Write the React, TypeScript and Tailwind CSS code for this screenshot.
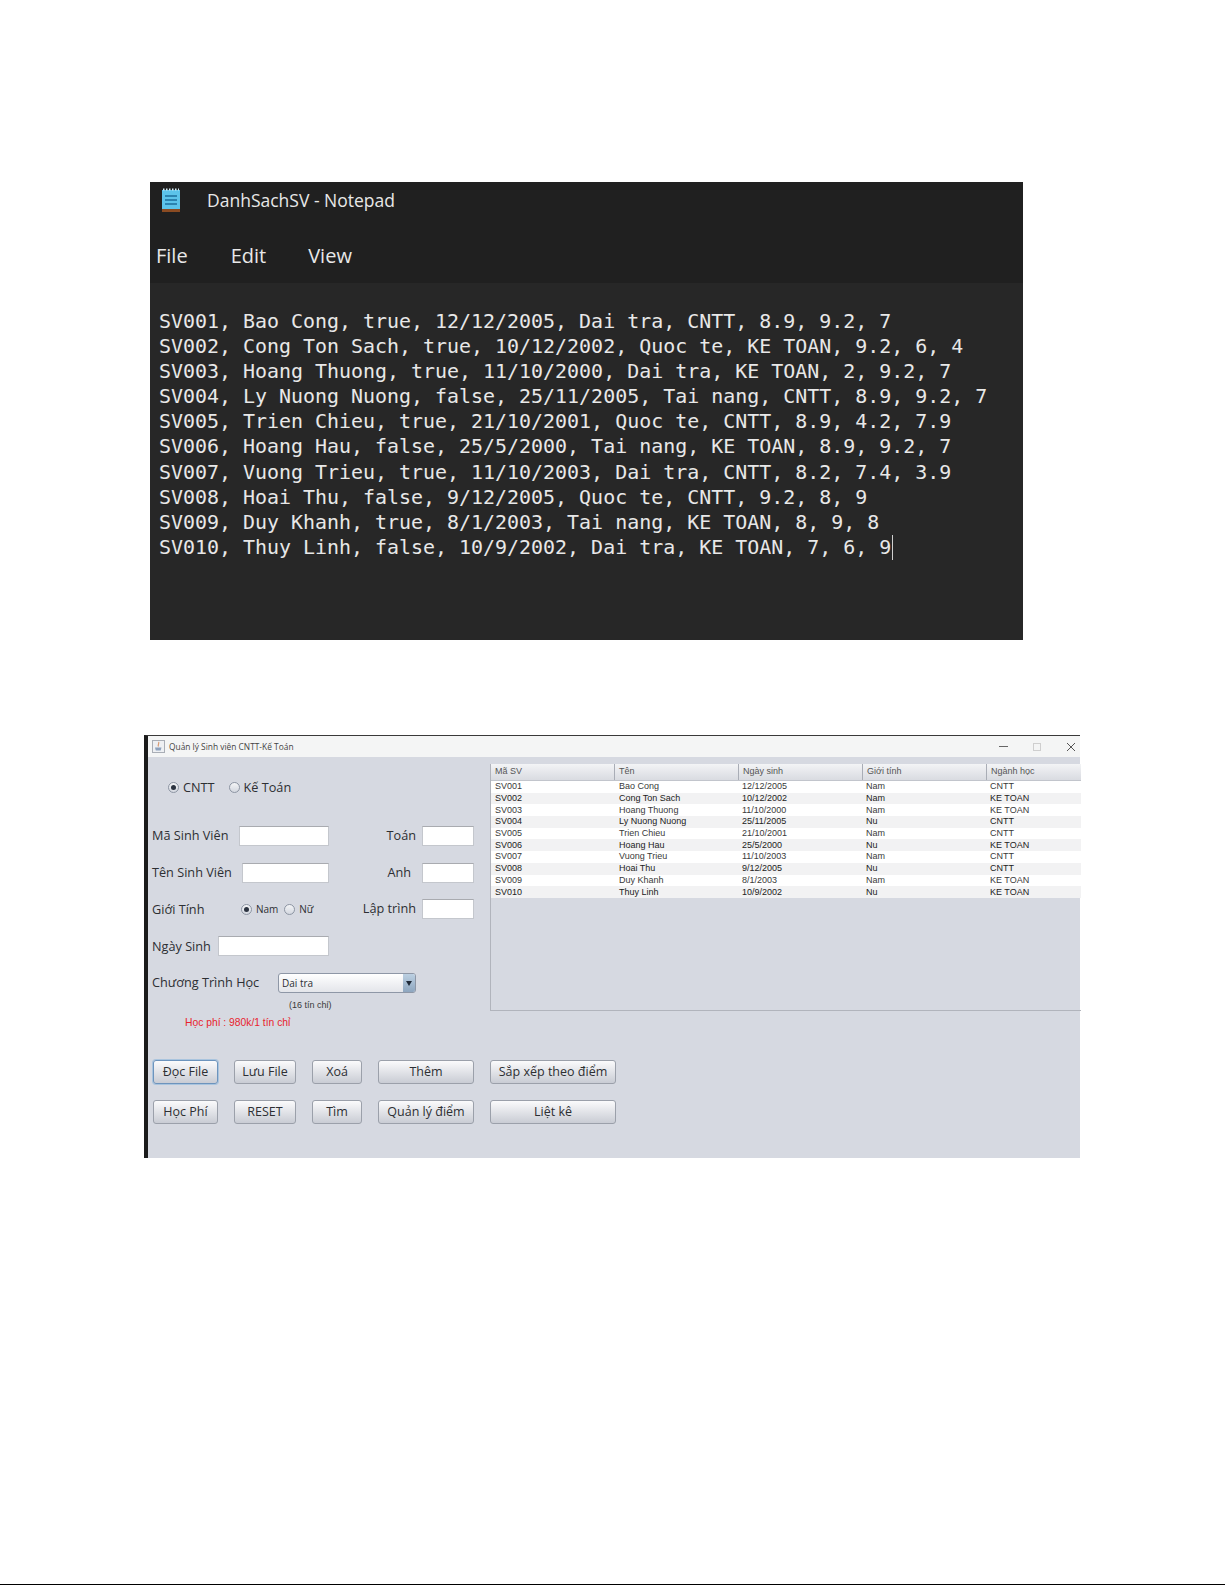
import type { ReactNode } from 'react'

const NOTEPAD_LINES = [
  'SV001, Bao Cong, true, 12/12/2005, Dai tra, CNTT, 8.9, 9.2, 7',
  'SV002, Cong Ton Sach, true, 10/12/2002, Quoc te, KE TOAN, 9.2, 6, 4',
  'SV003, Hoang Thuong, true, 11/10/2000, Dai tra, KE TOAN, 2, 9.2, 7',
  'SV004, Ly Nuong Nuong, false, 25/11/2005, Tai nang, CNTT, 8.9, 9.2, 7',
  'SV005, Trien Chieu, true, 21/10/2001, Quoc te, CNTT, 8.9, 4.2, 7.9',
  'SV006, Hoang Hau, false, 25/5/2000, Tai nang, KE TOAN, 8.9, 9.2, 7',
  'SV007, Vuong Trieu, true, 11/10/2003, Dai tra, CNTT, 8.2, 7.4, 3.9',
  'SV008, Hoai Thu, false, 9/12/2005, Quoc te, CNTT, 9.2, 8, 9',
  'SV009, Duy Khanh, true, 8/1/2003, Tai nang, KE TOAN, 8, 9, 8',
  'SV010, Thuy Linh, false, 10/9/2002, Dai tra, KE TOAN, 7, 6, 9',
]

const COLUMNS = ['Mã SV', 'Tên', 'Ngày sinh', 'Giới tính', 'Ngành học']

const STUDENTS = [
  ['SV001', 'Bao Cong', '12/12/2005', 'Nam', 'CNTT'],
  ['SV002', 'Cong Ton Sach', '10/12/2002', 'Nam', 'KE TOAN'],
  ['SV003', 'Hoang Thuong', '11/10/2000', 'Nam', 'KE TOAN'],
  ['SV004', 'Ly Nuong Nuong', '25/11/2005', 'Nu', 'CNTT'],
  ['SV005', 'Trien Chieu', '21/10/2001', 'Nam', 'CNTT'],
  ['SV006', 'Hoang Hau', '25/5/2000', 'Nu', 'KE TOAN'],
  ['SV007', 'Vuong Trieu', '11/10/2003', 'Nam', 'CNTT'],
  ['SV008', 'Hoai Thu', '9/12/2005', 'Nu', 'CNTT'],
  ['SV009', 'Duy Khanh', '8/1/2003', 'Nam', 'KE TOAN'],
  ['SV010', 'Thuy Linh', '10/9/2002', 'Nu', 'KE TOAN'],
]

const BUTTONS = ['Đọc File', 'Lưu File', 'Xoá', 'Thêm', 'Sắp xếp theo điểm', 'Học Phí', 'RESET', 'Tìm', 'Quản lý điểm', 'Liệt kê']

const NotepadIcon = () => (
  <svg width="20" height="25" viewBox="0 0 20 25" className="shrink-0">
    <rect x="1" y="2" width="18" height="19" fill="#5cc3ea" />
    <rect x="1" y="21" width="18" height="3" fill="#8a4b22" />
    <path d="M2 1.5h16" stroke="#d8eef7" strokeWidth="2" strokeDasharray="1.5 1.5" />
    <path d="M4 8h12M4 12h12M4 16h12" stroke="#1d6f9c" strokeWidth="1.6" />
  </svg>
)

const JavaIcon = () => (
  <svg width="13" height="13" viewBox="0 0 13 13" className="shrink-0">
    <rect x="0.5" y="0.5" width="12" height="12" fill="#eef0f3" stroke="#a9aeb6" />
    <path d="M3 7.5h6.5l-.8 3H3.8z" fill="#8ea2bd" />
    <path d="M6.5 2c1.2 1.4-1.2 2.4 0 4.5" stroke="#d99a72" strokeWidth="1.2" fill="none" />
  </svg>
)

const Radio = ({ checked = false }: { checked?: boolean }) => (
  <span className="flex h-[11px] w-[11px] shrink-0 items-center justify-center rounded-full border border-[#8d95a3] bg-gradient-to-b from-[#f4f5f7] to-[#d3d7df]">
    {checked && <span className="h-[5px] w-[5px] rounded-full bg-[#2b3340]" />}
  </span>
)

const Field = ({ className }: { className: string }) => (
  <div className={`h-5 shrink-0 border border-[#c4c7cd] border-t-[#a9abb0] bg-white ${className}`} />
)

const Row = ({ mt, children }: { mt: string; children: ReactNode }) => (
  <div className={`flex h-5 w-[322px] items-center justify-between text-[12.7px] text-[#2d2f33] ${mt}`}>{children}</div>
)

const Score = ({ label, pr = '' }: { label: string; pr?: string }) => (
  <div className="flex items-center gap-[6px]">
    <span className={pr}>{label}</span>
    <Field className="w-[52px]" />
  </div>
)

const StudentTable = () => (
  <div className="mt-[7px] h-[247px] flex-1 border-b border-l border-[#b1b4bc] font-['Liberation_Sans',sans-serif] text-[9px] text-[#3a3a3a]">
    <div className="grid h-[17px] grid-cols-[124px_124px_124px_124px_94px] border-b border-[#c2c5cc] bg-gradient-to-b from-[#f3f4f6] to-[#d9dbe1]">
      {COLUMNS.map((col, j) => (
        <div key={col} className={`flex items-center pl-1 text-[#555] ${j < 4 ? 'border-r border-[#a9adb6]' : ''}`}>
          {col}
        </div>
      ))}
    </div>
    {STUDENTS.map((student, i) => (
      <div
        key={student[0]}
        className={`grid h-[11.7px] grid-cols-[124px_124px_124px_124px_94px] items-center ${i % 2 ? 'bg-[#f2f2f3] text-[#222]' : 'bg-white'}`}
      >
        {student.map((cell, j) => (
          <div key={j} className={`leading-none ${j < 2 ? 'pl-1' : 'pl-[3px]'}`}>
            {cell}
          </div>
        ))}
      </div>
    ))}
  </div>
)

const JavaWindow = () => (
  <div className="ml-[144px] mt-[95px] flex h-[423px] w-[936px] flex-col border-l-4 border-t border-l-[#1b1b1b] border-t-[#3a3a3a] bg-[#d6d9e1] font-['Open_Sans',sans-serif]">
    {/* Title bar */}
    <div className="flex h-[21px] shrink-0 items-center bg-[#f4f5f5] pl-[4px] text-[8.4px] text-[#444]">
      <JavaIcon />
      <span className="ml-[4px] pt-px">Quản lý Sinh viên CNTT-Kế Toán</span>
      <div className="ml-auto flex items-center text-[#555]">
        <span className="h-px w-[9px] bg-[#666]" />
        <span className="ml-[25px] h-2 w-2 border border-[#cfcfcf]" />
        <svg width="10" height="10" viewBox="0 0 10 10" className="ml-[25px] mr-[4px]">
          <path d="M1 1l8 8M9 1l-8 8" stroke="#555" strokeWidth="1" />
        </svg>
      </div>
    </div>

    <div className="flex h-[303px] shrink-0">
      {/* Form */}
      <div className="w-[342px] shrink-0 pl-1">
        <div className="mt-5 flex h-5 items-center pl-[16px] pt-px text-[12.7px] text-[#2d2f33]">
          <Radio checked />
          <span className="ml-[4px]">CNTT</span>
          <span className="ml-[14px]">
            <Radio />
          </span>
          <span className="ml-[4px]">Kế Toán</span>
        </div>

        <Row mt="mt-[29px]">
          <div className="flex w-[177px] items-center justify-between">
            <span>Mã Sinh Viên</span>
            <Field className="w-[90px]" />
          </div>
          <Score label="Toán" />
        </Row>
        <Row mt="mt-[17px]">
          <div className="flex w-[177px] items-center justify-between">
            <span>Tên Sinh Viên</span>
            <Field className="w-[87px]" />
          </div>
          <Score label="Anh" pr="pr-[5px]" />
        </Row>
        <Row mt="mt-4">
          <div className="flex w-[177px] items-center">
            <span className="w-[89px] pt-px">Giới Tính</span>
            <Radio checked />
            <span className="ml-1 text-[10px]">Nam</span>
            <span className="ml-[6px]">
              <Radio />
            </span>
            <span className="ml-1 text-[10px]">Nữ</span>
          </div>
          <Score label="Lập trình" />
        </Row>
        <Row mt="mt-[17px]">
          <div className="flex w-[177px] items-center justify-between">
            <span className="pt-px">Ngày Sinh</span>
            <Field className="w-[111px]" />
          </div>
        </Row>

        <div className="mt-[17px] flex h-5 items-center text-[12.7px] text-[#2d2f33]">
          <span className="w-[126px]">Chương Trình Học</span>
          <div className="flex h-[20px] w-[138px] items-stretch overflow-hidden rounded-[3px] border border-[#8e97a6] bg-gradient-to-b from-white to-[#e3e5ea]">
            <span className="flex-1 pl-[3px] text-[10px] leading-[18px]">Dai tra</span>
            <span className="flex w-[12px] items-center justify-center bg-gradient-to-b from-[#bcd0e2] to-[#8ea6bf]">
              <svg width="6" height="5" viewBox="0 0 6 5">
                <path d="M0 0h6L3 5z" fill="#1f2a38" />
              </svg>
            </span>
          </div>
        </div>

        <div className="ml-[137px] mt-[6px] h-3 font-['Liberation_Sans',sans-serif] text-[9px] leading-3 text-[#3a3a3a]">(16 tín chỉ)</div>
        <div className="ml-[33px] mt-[6px] h-3 font-['Liberation_Sans',sans-serif] text-[10.3px] leading-3 text-[#e8232d]">Học phí : 980k/1 tín chỉ</div>
      </div>

      <StudentTable />
    </div>

    {/* Buttons */}
    <div className="ml-[5px] grid w-fit grid-cols-[65px_62px_50px_96px_126px] gap-x-4 gap-y-4">
      {BUTTONS.map((label, i) => (
        <button
          key={label}
          className={`h-6 rounded-[3px] border bg-gradient-to-b from-[#fbfbfc] to-[#c9ccd4] pt-px text-[12.5px] text-[#2d2f33] ${
            i === 0 ? 'border-[#6d94bd] shadow-[0_0_0_1px_#a9c4de]' : 'border-[#9ba0aa]'
          }`}
        >
          {label}
        </button>
      ))}
    </div>
  </div>
)

const Notepad = () => (
  <div className="ml-[150px] mt-[182px] h-[458px] w-[873px] bg-[#272727] text-[#e8e8e8]">
    <div className="h-[101px] bg-[#202020] font-['Open_Sans',sans-serif]">
      <div className="flex h-[35px] items-center pl-[11px] pt-[1px]">
        <NotepadIcon />
        <span className="ml-[26px] text-[17.5px]">DanhSachSV - Notepad</span>
      </div>
      <div className="flex items-center pl-[6px] pt-[25px] text-[20px] leading-[28px]">
        <span>File</span>
        <span className="ml-[43px]">Edit</span>
        <span className="ml-[42px]">View</span>
      </div>
    </div>
    <div className="pl-[9px] pt-[26px] font-['DejaVu_Sans_Mono',monospace] text-[19.95px] leading-[25.1px]">
      {NOTEPAD_LINES.map((line, i) => (
        <div key={i} className="flex h-[25.1px] items-center whitespace-pre">
          {line}
          {i === NOTEPAD_LINES.length - 1 && <span className="ml-px h-[25px] w-px bg-[#cfcfcf]" />}
        </div>
      ))}
    </div>
  </div>
)

export default function App() {
  return (
    <div className="h-[1585px] w-[1225px] overflow-hidden border-b border-black bg-white">
      <div className="flow-root">
        <Notepad />
        <JavaWindow />
      </div>
    </div>
  )
}
